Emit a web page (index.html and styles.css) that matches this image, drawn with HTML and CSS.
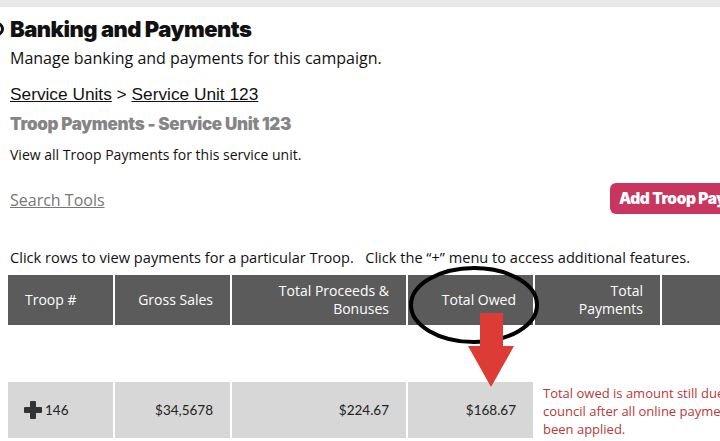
FILE: index.html
```html
<!DOCTYPE html>
<html>
<head>
<meta charset="utf-8">
<link rel="stylesheet" href="styles.css">
</head>
<body>
<div class="topbar"></div>
<div class="page">
  <div class="title-row">
    <span class="title-icon"></span>
    <h1 class="title">Banking and Payments</h1>
  </div>
  <p class="subtitle">Manage banking and payments for this campaign.</p>
  <div class="crumbs"><a class="crumb">Service Units</a> &gt; <a class="crumb">Service Unit 123</a></div>
  <h2 class="section">Troop Payments - Service Unit 123</h2>
  <p class="desc">View all Troop Payments for this service unit.</p>
  <div class="tools-row">
    <a class="search-tools">Search Tools</a>
    <button class="add-btn">Add Troop Payment</button>
  </div>
  <p class="hint">Click rows to view payments for a particular Troop.&nbsp;&nbsp;&nbsp;Click the “+” menu to access additional features.</p>
  <div class="table">
    <div class="thead">
      <div class="th th-left">Troop #</div>
      <div class="th">Gross Sales</div>
      <div class="th">Total Proceeds &amp;<br>Bonuses</div>
      <div class="th">Total Owed</div>
      <div class="th">Total<br>Payments</div>
      <div class="th"></div>
    </div>
    <div class="trow">
      <div class="td td-left"><span class="plus"></span>146</div>
      <div class="td">$34,5678</div>
      <div class="td">$224.67</div>
      <div class="td">$168.67</div>
      <div class="note">Total owed is amount still due to council after all online payments have been applied.</div>
    </div>
  </div>
</div>
<svg class="annot" width="720" height="441" viewBox="0 0 720 441">
  <ellipse cx="474" cy="305" rx="63" ry="37" fill="none" stroke="#000" stroke-width="4"/>
  <polygon points="480,313 503,313 503,346 514,346 491,387 468,346 480,346" fill="#dd3b36"/>
</svg>
</body>
</html>
```
FILE: styles.css
```css
html, body {
  margin: 0;
  padding: 0;
  background: #fff;
  width: 720px;
  height: 441px;
  overflow: hidden;
  position: relative;
}
.topbar {
  height: 7px;
  background: #e8e8e8;
}
.page {
  padding-left: 10px;
  font-family: "Open Sans", "Lato", sans-serif;
  color: #111;
}
.title-row {
  display: flex;
  align-items: center;
  height: 34px;
  margin-top: 5px;
  position: relative;
}
.title-icon {
  position: absolute;
  left: -40px;
  top: 7px;
  width: 34px;
  height: 20px;
  border-radius: 50%;
  border: 3px solid #111;
  box-sizing: border-box;
}
.title {
  margin: 0;
  font-family: "Inter", sans-serif;
  font-weight: 900;
  font-size: 22px;
  letter-spacing: -0.5px;
  line-height: 34px;
  color: #111;
}
.subtitle {
  margin: 1px 0 0;
  font-size: 16px;
  line-height: 22px;
  color: #111;
}
.crumbs {
  margin-top: 14px;
  font-family: "Liberation Sans", Arial, sans-serif;
  font-size: 17.3px;
  line-height: 22px;
  color: #111;
}
.crumb {
  color: #111;
  text-decoration: underline;
}
.section {
  margin: 8px 0 0;
  font-family: "Inter", sans-serif;
  font-weight: 900;
  font-size: 17px;
  letter-spacing: -0.3px;
  line-height: 22px;
  color: #858585;
}
.desc {
  margin: 10px 0 0;
  font-size: 14px;
  line-height: 20px;
  color: #111;
}
.tools-row {
  display: flex;
  justify-content: space-between;
  align-items: center;
  margin-top: 18px;
  height: 34px;
}
.search-tools {
  font-size: 16px;
  color: #777;
  text-decoration: underline;
}
.add-btn {
  margin-right: -130px;
  margin-bottom: 3px;
  width: 240px;
  height: 31px;
  background: #c8365f;
  border: none;
  border-radius: 6px;
  color: #fff;
  font-family: "Inter", sans-serif;
  font-weight: 900;
  font-size: 15.5px;
  letter-spacing: -0.4px;
  text-align: left;
  padding: 0 9px;
}
.hint {
  margin: 30px 0 0;
  font-size: 14.6px;
  line-height: 20px;
  color: #111;
}
.table {
  margin-left: -2px;
  margin-top: 8px;
}
.thead, .trow {
  display: grid;
  grid-template-columns: 105px 115px 174px 125px 125px 80px;
  column-gap: 2px;
}
.thead {
  height: 50px;
}
.th {
  background: #5b5b5b;
  color: #fff;
  font-size: 14px;
  line-height: 18px;
  text-align: right;
  padding-right: 17px;
  display: flex;
  align-items: center;
  justify-content: flex-end;
}
.th-left {
  justify-content: flex-start;
  padding-left: 17px;
  text-align: left;
}
.trow {
  margin-top: 57px;
  height: 46px;
}
.td {
  background: #d7d7d7;
  font-family: "Lato", sans-serif;
  font-size: 13.5px;
  color: #222;
  display: flex;
  align-items: center;
  justify-content: flex-end;
  padding-right: 17px;
}
.td-left {
  justify-content: flex-start;
  padding-left: 16px;
}
.plus {
  position: relative;
  width: 18px;
  height: 18px;
  margin-right: 3px;
}
.plus::before, .plus::after {
  content: "";
  position: absolute;
  background: #333;
  border-radius: 1px;
}
.plus::before {
  left: 0;
  top: 6px;
  width: 18px;
  height: 6px;
}
.plus::after {
  left: 6px;
  top: 0;
  width: 6px;
  height: 18px;
}
.note {
  grid-column: 5 / span 2;
  width: 240px;
  padding-left: 8px;
  font-family: "Open Sans", sans-serif;
  font-size: 13px;
  line-height: 18px;
  color: #b83838;
  white-space: normal;
  margin-top: 2px;
}
.annot {
  position: absolute;
  left: 0;
  top: 0;
  pointer-events: none;
}
```
